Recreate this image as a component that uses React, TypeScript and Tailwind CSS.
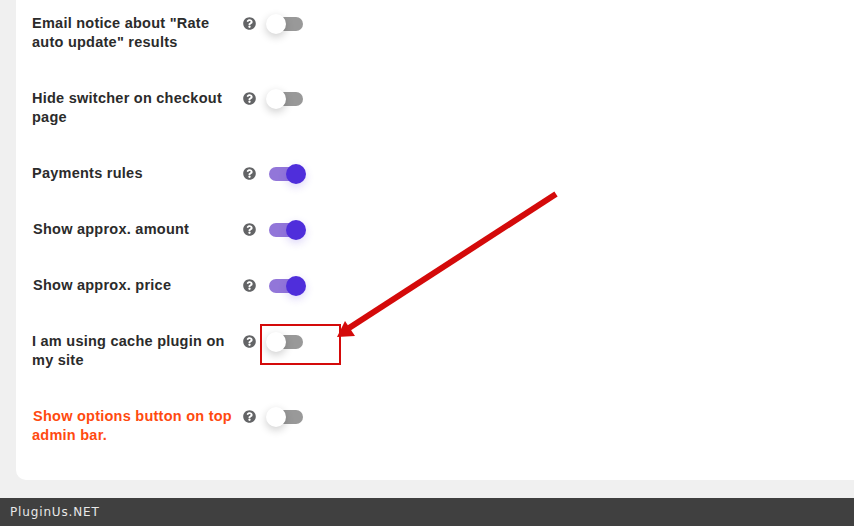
import { FaQuestionCircle } from 'react-icons/fa';

interface SettingRow {
  label: string;
  enabled: boolean;
  accent?: boolean;
  nudged?: boolean;
}

const rows: SettingRow[] = [
  { label: 'Email notice about "Rate auto update" results', enabled: false },
  { label: 'Hide switcher on checkout page', enabled: false },
  { label: 'Payments rules', enabled: true },
  { label: 'Show approx. amount', enabled: true, nudged: true },
  { label: 'Show approx. price', enabled: true, nudged: true },
  { label: 'I am using cache plugin on my site', enabled: false },
  { label: 'Show options button on top admin bar.', enabled: false, accent: true, nudged: true },
];

function Toggle({ enabled }: { enabled: boolean }) {
  return (
    <div className="relative -mb-px ml-[10px] h-5 w-10 shrink-0">
      <div
        className={`absolute left-[3px] top-[3px] h-[14px] w-[34px] rounded-full ${
          enabled ? 'bg-[#9276d9]' : 'bg-[#999999]'
        }`}
      />
      <div
        className={
          enabled
            ? 'absolute left-5 top-0 h-5 w-5 rounded-full bg-[#4f2edb] shadow-[0_3px_8px_rgba(79,46,219,0.2)]'
            : 'absolute left-0 top-0 h-5 w-5 rounded-full bg-white shadow-[0_3px_8px_rgba(0,0,0,0.2)]'
        }
      />
    </div>
  );
}

export default function App() {
  return (
    <div className="relative flex h-[526px] w-[854px] flex-col overflow-hidden bg-[#f0f0f0] font-['Liberation_Sans',Arial,sans-serif]">
      <div className="ml-4 h-[480px] shrink-0 rounded-bl-[10px] bg-white pl-4 pt-[14px]">
        <div className="flex flex-col gap-[37px]">
          {rows.map((row) => (
            <div key={row.label} className="flex items-start">
              <p
                className={`w-[211px] text-[14.5px] font-bold leading-[19px] tracking-[0.25px] ${
                  row.accent ? 'text-[#ff4a0f]' : 'text-[#2b2b2b]'
                } ${row.nudged ? 'indent-px' : ''}`}
              >
                {row.label}
              </p>
              <FaQuestionCircle className="mt-[3px] shrink-0 text-[13px] text-[#636466]" />
              <Toggle enabled={row.enabled} />
            </div>
          ))}
        </div>
      </div>
      <div className="mt-[18px] flex h-7 items-center bg-[#404040] pl-[10px] font-['DejaVu_Sans',sans-serif] text-[12px] tracking-[0.85px] text-[#e8e8e8]">
        PluginUs.NET
      </div>

      {/* annotation drawn over the screenshot */}
      <div className="absolute left-[260px] top-[324px] h-[41px] w-[81px] border-2 border-[#d40a0a]" />
      <svg className="absolute left-0 top-0" width="854" height="526" fill="none">
        <line x1="556" y1="194" x2="349" y2="328" stroke="#d40a0a" strokeWidth="6" />
        <polygon points="337,337 345,321 355,336" fill="#d40a0a" />
      </svg>
    </div>
  );
}
